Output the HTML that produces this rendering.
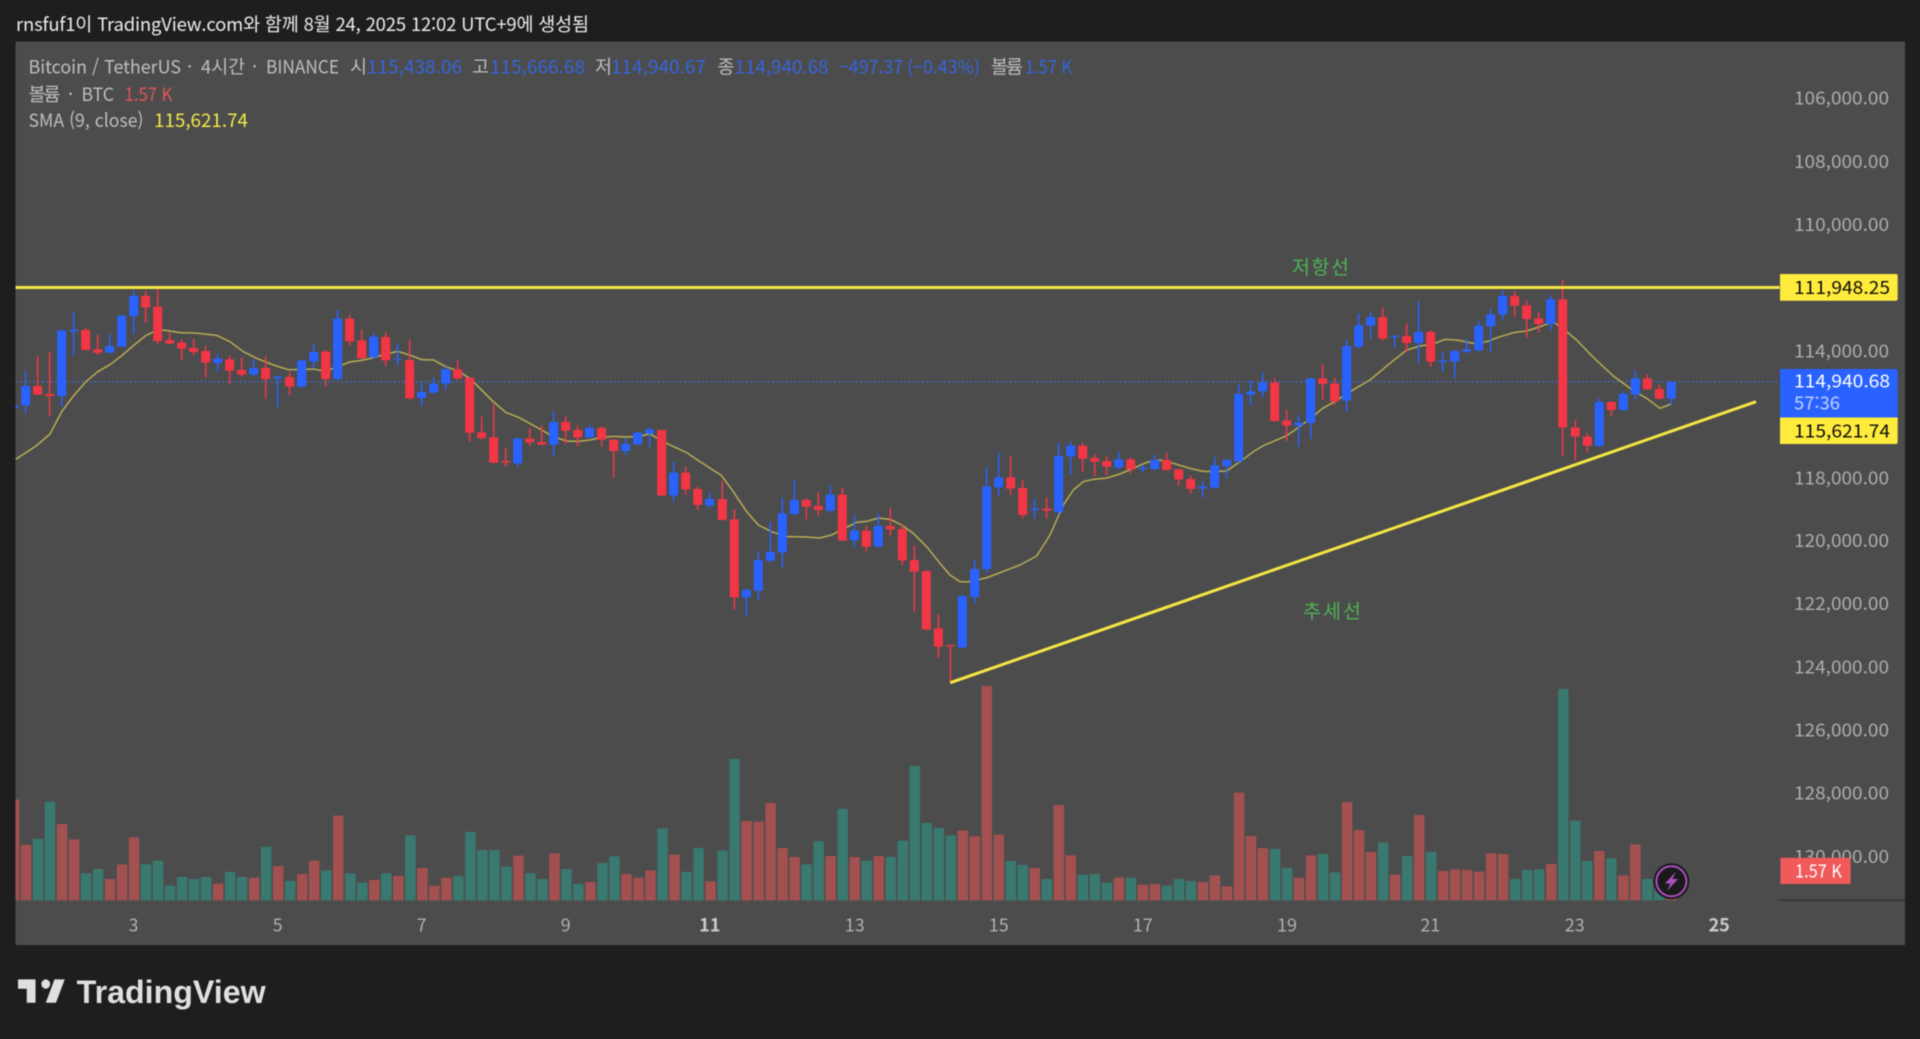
<!DOCTYPE html>
<html lang="ko">
<head>
<meta charset="utf-8">
<title>BTCUSDT chart</title>
<style>
html,body{margin:0;padding:0;background:#1e1e1e;width:1920px;height:1039px;overflow:hidden}
svg{position:absolute;left:0;top:0;display:block;filter:blur(.4px)}
text{font-family:"Noto Sans CJK KR","Liberation Sans",sans-serif;white-space:pre}
.g{fill:#bebebe;font-size:18.5px}
.b{fill:#3565de;font-size:18.5px}
.a{fill:#adadad;font-size:18px}
.t{fill:#b0b0b0;font-size:18px;text-anchor:middle}
.l{fill:#0c0c0c;font-size:18px}
</style>
</head>
<body>
<svg width="1920" height="1039" viewBox="0 0 1920 1039" xmlns="http://www.w3.org/2000/svg">
<defs><clipPath id="c"><rect x="15.5" y="42" width="1764" height="903"/></clipPath></defs>
<rect width="1920" height="1039" fill="#1e1e1e"/>
<rect x="15.5" y="41.5" width="1889.5" height="903.5" fill="#4c4c4c"/>

<text x="16" y="31" font-size="18.5" fill="#ececec" textLength="573" lengthAdjust="spacing">rnsfuf1이 TradingView.com와 함께 8월 24, 2025 12:02 UTC+9에 생성됨</text>

<text class="g" x="28.5" y="73.5" textLength="152.5" lengthAdjust="spacingAndGlyphs">Bitcoin / TetherUS</text>
<text class="g" x="187" y="73.5">·</text>
<text class="g" x="201" y="73.5" textLength="44" lengthAdjust="spacingAndGlyphs">4시간</text>
<text class="g" x="252" y="73.5">·</text>
<text class="g" x="266" y="73.5" textLength="73" lengthAdjust="spacingAndGlyphs">BINANCE</text>
<text class="g" x="350" y="73.5">시</text><text class="b" x="367" y="73.5" textLength="95" lengthAdjust="spacingAndGlyphs">115,438.06</text>
<text class="g" x="472" y="73.5">고</text><text class="b" x="490" y="73.5" textLength="95" lengthAdjust="spacingAndGlyphs">115,666.68</text>
<text class="g" x="595" y="73.5">저</text><text class="b" x="611" y="73.5" textLength="95" lengthAdjust="spacingAndGlyphs">114,940.67</text>
<text class="g" x="717.5" y="73.5">종</text><text class="b" x="734.5" y="73.5" textLength="94" lengthAdjust="spacingAndGlyphs">114,940.68</text>
<text class="b" x="839" y="73.5" textLength="141" lengthAdjust="spacingAndGlyphs">−497.37 (−0.43%)</text>
<text class="g" x="991" y="73.5" textLength="32">볼륨</text><text class="b" x="1025" y="73.5" textLength="47" lengthAdjust="spacingAndGlyphs">1.57 K</text>
<text class="g" x="28.5" y="100.8" textLength="32">볼륨</text>
<text class="g" x="68" y="100.8">·</text>
<text class="g" x="81.5" y="100.8" textLength="32.5" lengthAdjust="spacingAndGlyphs">BTC</text>
<text x="124.5" y="100.8" font-size="18.5" fill="#e25555" textLength="48" lengthAdjust="spacingAndGlyphs">1.57 K</text>
<text class="g" x="28.5" y="126.8" textLength="115" lengthAdjust="spacingAndGlyphs">SMA (9, close)</text>
<text x="154" y="126.8" font-size="18.5" fill="#f4e948" textLength="94" lengthAdjust="spacingAndGlyphs">115,621.74</text>

<g clip-path="url(#c)">
<path stroke="#4468c8" stroke-width="1.5" stroke-dasharray="1.8 2.6" d="M15.5 381.7H1780" fill="none"/>

<g transform="translate(14 680) scale(12.01 .33333)" fill="none" stroke-width=".875">
<path stroke="#a25050" d="M0 358V661M1 495V661M4 432V661M5 478V661M8 597V661M9 553V661M10 472V661M17 611V661M20 593V661M22 558V661M24 582V661M25 542V661M27 407V661M30 600V661M32 588V661M34 564V661M35 617V661M36 593V661M42 527V661M45 520V661M48 606V661M51 582V661M52 593V661M53 571V661M55 524V661M58 604V661M61 423V661M62 425V661M63 369V661M64 504V661M65 531V661M68 528V661M70 531V661M72 528V661M79 451V661M80 469V661M81 18V661M82 464V661M85 564V661M87 375V661M88 526V661M92 593V661M94 614V661M95 612V661M99 606V661M100 586V661M101 619V661M102 338V661M103 468V661M104 504V661M107 593V661M108 526V661M111 366V661M112 450V661M113 516V661M115 584V661M117 405V661M119 573V661M120 568V661M121 570V661M122 575V661M123 520V661M124 522V661M128 552V661M132 513V661M134 586V661M135 493V661M138 640V661"/>
<path stroke="#39796f" d="M2 476V661M3 365V661M6 580V661M7 567V661M11 553V661M12 542V661M13 617V661M14 591V661M15 597V661M16 591V661M18 576V661M19 591V661M21 500V661M23 603V661M26 571V661M28 580V661M29 608V661M31 580V661M33 466V661M37 588V661M38 456V661M39 510V661M40 510V661M41 560V661M43 580V661M44 597V661M46 567V661M47 612V661M49 549V661M50 529V661M54 445V661M56 576V661M57 504V661M59 511V661M60 237V661M66 553V661M67 484V661M69 387V661M71 542V661M73 531V661M74 482V661M75 258V661M76 429V661M77 444V661M78 466V661M83 543V661M84 555V661M86 597V661M89 584V661M90 582V661M91 608V661M93 593V661M96 617V661M97 597V661M98 603V661M105 507V661M106 564V661M109 522V661M110 577V661M114 487V661M116 528V661M118 516V661M125 597V661M126 570V661M127 568V661M129 27V661M130 422V661M131 543V661M133 535V661M136 597V661M137 605V661"/>
</g>

<g transform="translate(0 270) scale(.33333)" fill="none">
<polyline stroke="#b9ac52" stroke-width="4.5" stroke-linejoin="round" points="47,568 108,528 150,492 185,425 220,378 258,335 293,305 330,284 365,257 400,227 437,197 460,186 490,180 540,188 585,189 650,196 690,215 730,245 770,265 820,285 865,299 905,299 941,297 977,304 1013,290 1049,276 1085,271 1121,263 1157,252 1193,244 1229,255 1265,269 1301,270 1337,290 1373,302 1409,325 1420,335 1480,395 1517,427 1558,443 1625,480 1660,500 1700,513 1735,514 1770,510 1805,502 1841,499 1877,501 1913,500 1950,492 2000,520 2060,548 2100,575 2165,617 2200,665 2240,725 2275,765 2315,785 2360,800 2420,801 2458,804 2495,795 2540,772 2570,757 2600,754 2635,744 2670,748 2705,765 2740,790 2780,830 2820,880 2850,915 2880,935 2901,936 2958,924 3060,885 3110,858 3150,795 3190,705 3220,660 3250,635 3280,628 3320,624 3360,612 3400,595 3440,577 3480,570 3520,580 3570,595 3610,604 3650,604 3680,603 3720,575 3760,545 3790,527 3860,497 3896,472 3932,445 3968,415 4004,395 4050,365 4110,330 4170,280 4220,240 4260,228 4300,222 4335,208 4370,210 4420,220 4460,215 4500,200 4545,187 4580,183 4620,170 4660,155 4700,185 4730,210 4780,262 4840,318 4900,362 4940,385 4980,415 5014,402"/>
<path stroke="#2962ff" stroke-width="4.5" d="M77 305V430M185 178V410M221 126V258M329 192V250M365 135V230M401 60V192M653 252V306M761 268V318M833 317V411M905 271V352M941 222V296M1013 120V330M1121 190V265M1193 222V286M1265 335V408M1301 322V370M1337 290V360M1553 502V590M1661 425V558M1769 464V504M1877 505V555M1913 485V525M1949 472V532M2021 575V695M2129 668V715M2239 955V1038M2275 843V990M2311 756V877M2347 683V892M2383 630V735M2491 646V725M2563 737V834M2635 730V832M2887 975V1135M2924 870V1000M2960 590V910M2996 548V678M3104 685V745M3176 516V735M3212 515V614M3356 546V598M3428 585V607M3464 554V600M3608 634V682M3644 561V656M3680 567V625M3716 343V578M3752 330V408M3788 307V380M3896 435V530M3932 323V507M4040 208V425M4076 130V235M4112 127V207M4184 196V234M4256 95V278M4328 248V306M4364 240V325M4400 207V250M4436 152V245M4472 118V246M4508 60V150M4652 75V182M4798 385V530M4870 364V422M4906 300V390M5014 335V405"/>
<path stroke="#2962ff" stroke-width="27" d="M41 405V415M77 348V406M185 182V378M221 179V184M329 228V248M365 137V230M401 78V138M653 266V279M761 294V313M833 320V325M905 271V350M941 246V274M1013 146V327M1121 200V262M1193 267V270M1265 366V384M1301 341V368M1337 298V341M1553 506V580M1661 456V524M1769 474V502M1877 522V543M1913 488V523M1949 479V491M2021 608V677M2129 687V706M2239 960V982M2275 870V962M2311 846V872M2347 730V847M2383 690V732M2491 674V722M2563 782V811M2635 768V830M2887 978V1132M2924 897V981M2960 650V897M2996 622V652M3104 716V720M3176 558V726M3212 527V559M3356 568V592M3428 593V597M3464 570V597M3608 650V655M3644 586V653M3680 570V588M3716 372V574M3752 364V374M3788 337V364M3896 458V467M3932 325V459M4040 228V392M4076 166V230M4112 141V167M4184 197V201M4256 186V219M4328 272V276M4364 243V275M4400 238V245M4436 167V241M4472 133V169M4508 78V133M4652 88V162M4798 396V528M4870 372V420M4906 325V373M5014 336V386"/>
<path stroke="#f23645" stroke-width="4.5" d="M113 258V375M149 246V438M257 172V240M293 195V255M437 63V158M473 50V222M509 188V222M545 207V272M581 207V256M617 226V322M689 258V342M725 262V320M797 258V387M869 306V375M977 240V350M1049 134V226M1085 180V268M1157 186V288M1229 208V390M1373 272V330M1409 322V515M1445 440V508M1481 402V580M1517 533V590M1589 474V528M1625 466V525M1697 438V522M1733 466V530M1805 470V530M1841 509V622M2057 590V674M2093 650V720M2167 633V750M2203 718V1020M2419 685V748M2455 666V737M2527 653V812M2599 768V845M2671 713V797M2707 763V885M2743 826V1024M2779 902V1082M2815 1032V1164M2851 1125V1238M3032 558V675M3068 630V745M3140 683V745M3248 518V604M3284 552V618M3320 558V615M3392 563V610M3500 548V602M3536 597V648M3572 618V672M3824 325V455M3860 420V513M3968 282V388M4004 322V405M4148 112V212M4220 160V246M4292 180V290M4544 64V140M4580 92V203M4616 127V188M4688 28V558M4726 450V572M4762 490V548M4834 395V440M4942 312V360M4978 344V388"/>
<path stroke="#f23645" stroke-width="27" d="M113 348V374M149 372V378M257 180V240M293 238V248M437 78V112M473 110V213M509 210V221M545 218V236M581 234V246M617 243V278M689 268V302M725 300V314M797 294V327M869 321V349M977 245V327M1049 146V214M1085 211V264M1157 201V271M1229 270V385M1373 298V325M1409 323V488M1445 487V504M1481 502V578M1517 573V578M1589 506V517M1625 516V524M1697 456V482M1733 480V502M1805 474V509M1841 509V543M1985 480V677M2057 608V658M2093 657V705M2167 687V750M2203 748V982M2419 690V710M2455 708V720M2527 674V812M2599 782V830M2671 768V778M2707 777V871M2743 870V905M2779 903V1078M2815 1075V1130M2851 1125V1129M3032 622V656M3068 654V735M3140 716V722M3248 527V566M3284 564V575M3320 573V590M3392 568V598M3500 570V600M3536 598V628M3572 627V657M3824 338V453M3860 451V467M3968 325V342M4004 341V394M4148 141V206M4220 198V219M4292 186V275M4544 78V107M4580 106V147M4616 145V162M4688 88V472M4726 472V500M4762 500V527M4834 396V420M4942 325V358M4978 357V386"/>
</g>

<path d="M15.5 287.5H1780" stroke="#f5e642" stroke-width="3" fill="none"/>
<path d="M950.3 682.7L1756 401.7" stroke="#f5e642" stroke-width="3" fill="none"/>
<text x="1292" y="274" font-size="19.5" fill="#4fb253" textLength="57">저항선</text>
<text x="1303" y="618" font-size="19.5" fill="#4fb253" textLength="58">추세선</text>
</g>

<text class="a" x="1794" y="104.7" textLength="95" lengthAdjust="spacingAndGlyphs">106,000.00</text>
<text class="a" x="1794" y="167.9" textLength="95" lengthAdjust="spacingAndGlyphs">108,000.00</text>
<text class="a" x="1794" y="231" textLength="95" lengthAdjust="spacingAndGlyphs">110,000.00</text>
<text class="a" x="1794" y="357.4" textLength="95" lengthAdjust="spacingAndGlyphs">114,000.00</text>
<text class="a" x="1794" y="484.4" textLength="95" lengthAdjust="spacingAndGlyphs">118,000.00</text>
<text class="a" x="1794" y="547" textLength="95" lengthAdjust="spacingAndGlyphs">120,000.00</text>
<text class="a" x="1794" y="610.2" textLength="95" lengthAdjust="spacingAndGlyphs">122,000.00</text>
<text class="a" x="1794" y="673.4" textLength="95" lengthAdjust="spacingAndGlyphs">124,000.00</text>
<text class="a" x="1794" y="736.6" textLength="95" lengthAdjust="spacingAndGlyphs">126,000.00</text>
<text class="a" x="1794" y="799.6" textLength="95" lengthAdjust="spacingAndGlyphs">128,000.00</text>
<text class="a" x="1794" y="862.8" textLength="95" lengthAdjust="spacingAndGlyphs">130,000.00</text>

<path d="M1780 274H1895.7a2 2 0 0 1 2 2V298.7a2 2 0 0 1-2 2H1780Z" fill="#ffeb3b"/>
<text class="l" x="1794" y="293.8" textLength="96" lengthAdjust="spacingAndGlyphs">111,948.25</text>
<path d="M1780 369H1895.7a2 2 0 0 1 2 2V417.5H1780Z" fill="#2962ff"/>
<text x="1794" y="387.4" font-size="18" fill="#fff" textLength="96" lengthAdjust="spacingAndGlyphs">114,940.68</text>
<text x="1794" y="409.4" font-size="18" fill="#c3d3fa" textLength="46" lengthAdjust="spacingAndGlyphs">57:36</text>
<path d="M1780 417.5H1897.7V442a2 2 0 0 1-2 2H1780Z" fill="#ffeb3b"/>
<text class="l" x="1794" y="437.6" textLength="96" lengthAdjust="spacingAndGlyphs">115,621.74</text>

<path d="M1779 900.3H1905" stroke="#333" stroke-width="1.5" fill="none"/>
<path d="M1780.4 857.7H1848.6a2 2 0 0 1 2 2V882a2 2 0 0 1-2 2H1780.4Z" fill="#f05a5a"/>
<text x="1795" y="877.4" font-size="18" fill="#fff" textLength="47" lengthAdjust="spacingAndGlyphs">1.57 K</text>

<circle cx="1671.4" cy="881.3" r="18" fill="#1a1a1a"/>
<circle cx="1671.4" cy="881.3" r="15" fill="#1a1a1a" stroke="#ab4fc0" stroke-width="2"/>
<path d="M1676 871.5L1665 883.5H1670.5L1667 891L1678 879H1672.5Z" fill="#ab4fc0"/>

<text class="t" x="133.5" y="931.4">3</text>
<text class="t" x="277.6" y="931.4">5</text>
<text class="t" x="421.6" y="931.4">7</text>
<text class="t" x="565.7" y="931.4">9</text>
<text class="t" x="709.8" y="931.4" font-weight="700" style="fill:#cacaca">11</text>
<text class="t" x="854.7" y="931.4">13</text>
<text class="t" x="998.8" y="931.4">15</text>
<text class="t" x="1142.9" y="931.4">17</text>
<text class="t" x="1287" y="931.4">19</text>
<text class="t" x="1430.2" y="931.4">21</text>
<text class="t" x="1574.7" y="931.4">23</text>
<text class="t" x="1719.2" y="931.4" font-weight="700" style="fill:#cacaca">25</text>

<g transform="translate(15.1 970) scale(1.46 1.56)" fill="#e0e0e0">
<path d="M14 6H2v6h6v9h6V6Zm14 15h-7l6-15h7l-6 15Zm-7-9a3 3 0 1 0 0-6 3 3 0 0 0 0 6Z"/>
</g>
<text x="76.7" y="1003" font-size="32" font-weight="700" fill="#e0e0e0" textLength="189" lengthAdjust="spacingAndGlyphs" style="font-family:'Liberation Sans',sans-serif">TradingView</text>
</svg>
</body>
</html>
